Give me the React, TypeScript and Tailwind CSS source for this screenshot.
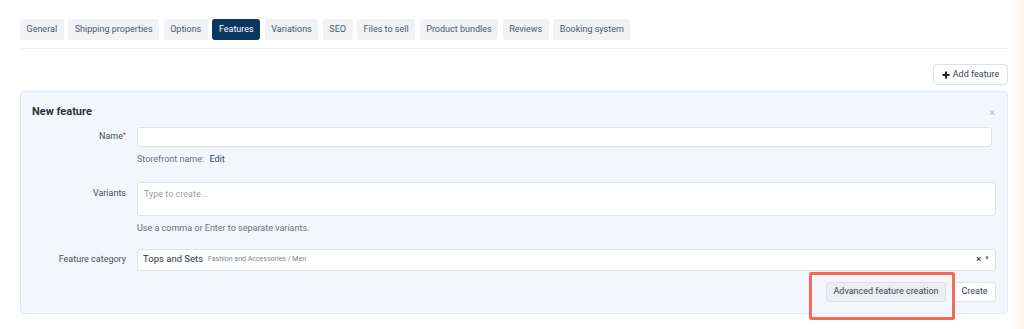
const tabs = [
  "General",
  "Shipping properties",
  "Options",
  "Features",
  "Variations",
  "SEO",
  "Files to sell",
  "Product bundles",
  "Reviews",
  "Booking system",
];

function Row({ label, required, top, children }: { label: string; required?: boolean; top?: boolean; children: React.ReactNode }) {
  return (
    <div className={`flex gap-[11px] ${top ? "items-start" : "items-center"}`}>
      <div className={`w-[94px] shrink-0 text-right text-[9px] text-[#4a4f56] ${top ? "pt-[5px]" : ""}`}>
        {label}
        {required && <span className="text-[#e0343a] align-top text-[7px]">*</span>}
      </div>
      <div className="flex-1">{children}</div>
    </div>
  );
}

export default function App() {
  return (
    <div
      className="w-[1024px] h-[329px] overflow-hidden bg-[linear-gradient(to_right,#ffffff_98.5%,#fdf5f1)]"
      style={{ fontFamily: "Roboto, 'Liberation Sans', sans-serif" }}
    >
      <div className="w-[988px] ml-[20px] pt-[19px]">
        {/* tabs */}
        <div className="flex gap-[4.6px] pb-[8px] border-b border-[#eef1f6]">
          {tabs.map((t) => (
            <div
              key={t}
              className={`h-[21px] px-[6.5px] flex items-center rounded-[3px] text-[9px] ${
                t === "Features" ? "bg-[#0b365f] text-white" : "bg-[#f1f2f4] text-[#4c5a6a]"
              }`}
            >
              {t}
            </div>
          ))}
        </div>

        <div className="flex justify-end pt-[15px] pb-[6px]">
          <div className="h-[21px] w-[75px] flex items-center justify-center gap-[3px] border border-[#dcdfe4] rounded-[4px] bg-white text-[9px] text-[#3c4650]">
            <svg width="8" height="8" viewBox="0 0 8 8">
              <path d="M4 0.5v7M0.5 4h7" stroke="#1a1f26" strokeWidth="2" />
            </svg>
            Add feature
          </div>
        </div>

        {/* panel */}
        <div className="h-[223px] bg-[#f3f6fc] border border-[#e0e9f6] rounded-[4px] pl-[11px] pr-[11px] pt-[12px] relative">
          <div className="flex items-center justify-between">
            <div className="text-[11px] font-bold text-[#2b3138]">New feature</div>
            <div className="pr-[1px] text-[11px] text-[#b5b9be] leading-none">×</div>
          </div>

          <div className="mt-[6px]">
            <Row label="Name" required>
              <div className="h-[20px] mr-[4px] bg-white border border-[#dfe3e8] rounded-[3px]" />
            </Row>
            <div className="ml-[105px] mt-[6px] text-[9px] text-[#6b737c]">
              Storefront name: <span className="ml-[3px] text-[#27435f]">Edit</span>
            </div>
          </div>

          <div className="mt-[16px]">
            <Row label="Variants" top>
              <div className="h-[34px] bg-white border border-[#dfe3e8] rounded-[3px] px-[6px] pt-[5px] text-[9px] text-[#9aa1a9]">
                Type to create...
              </div>
            </Row>
            <div className="ml-[105px] mt-[6px] text-[9px] text-[#6b737c]">Use a comma or Enter to separate variants.</div>
          </div>

          <div className="mt-[13px]">
            <Row label="Feature category">
              <div className="h-[22px] bg-white border border-[#dfe3e8] rounded-[3px] px-[5px] flex items-center">
                <span className="text-[9.5px] text-[#2e353d]">Tops and Sets</span>
                <span className="ml-[5px] text-[7px] text-[#7d858d]">Fashion and Accessories / Men</span>
                <span className="ml-auto text-[9px] font-bold text-[#444] leading-none">×</span>
                <span className="ml-[3px] text-[6px] text-[#777] leading-none -mt-[3px]">▼</span>
              </div>
            </Row>
          </div>

          <div className="flex justify-end gap-[7px] mt-[11px]">
            <div className="relative">
              <div className="h-[20px] w-[120px] flex items-center justify-center bg-[#eceef1] border border-[#dcdfe3] rounded-[3px] text-[9px] text-[#3b4550]">
                Advanced feature creation
              </div>
              <div className="absolute left-[-17px] top-[-10px] w-[146px] h-[48px] border-[3px] border-[#f36a5a] rounded-[2px]" />
            </div>
            <div className="h-[20px] w-[43px] flex items-center justify-center bg-white border border-[#e0e3e7] rounded-[3px] text-[9px] text-[#3b4550]">
              Create
            </div>
          </div>
        </div>
      </div>
    </div>
  );
}
